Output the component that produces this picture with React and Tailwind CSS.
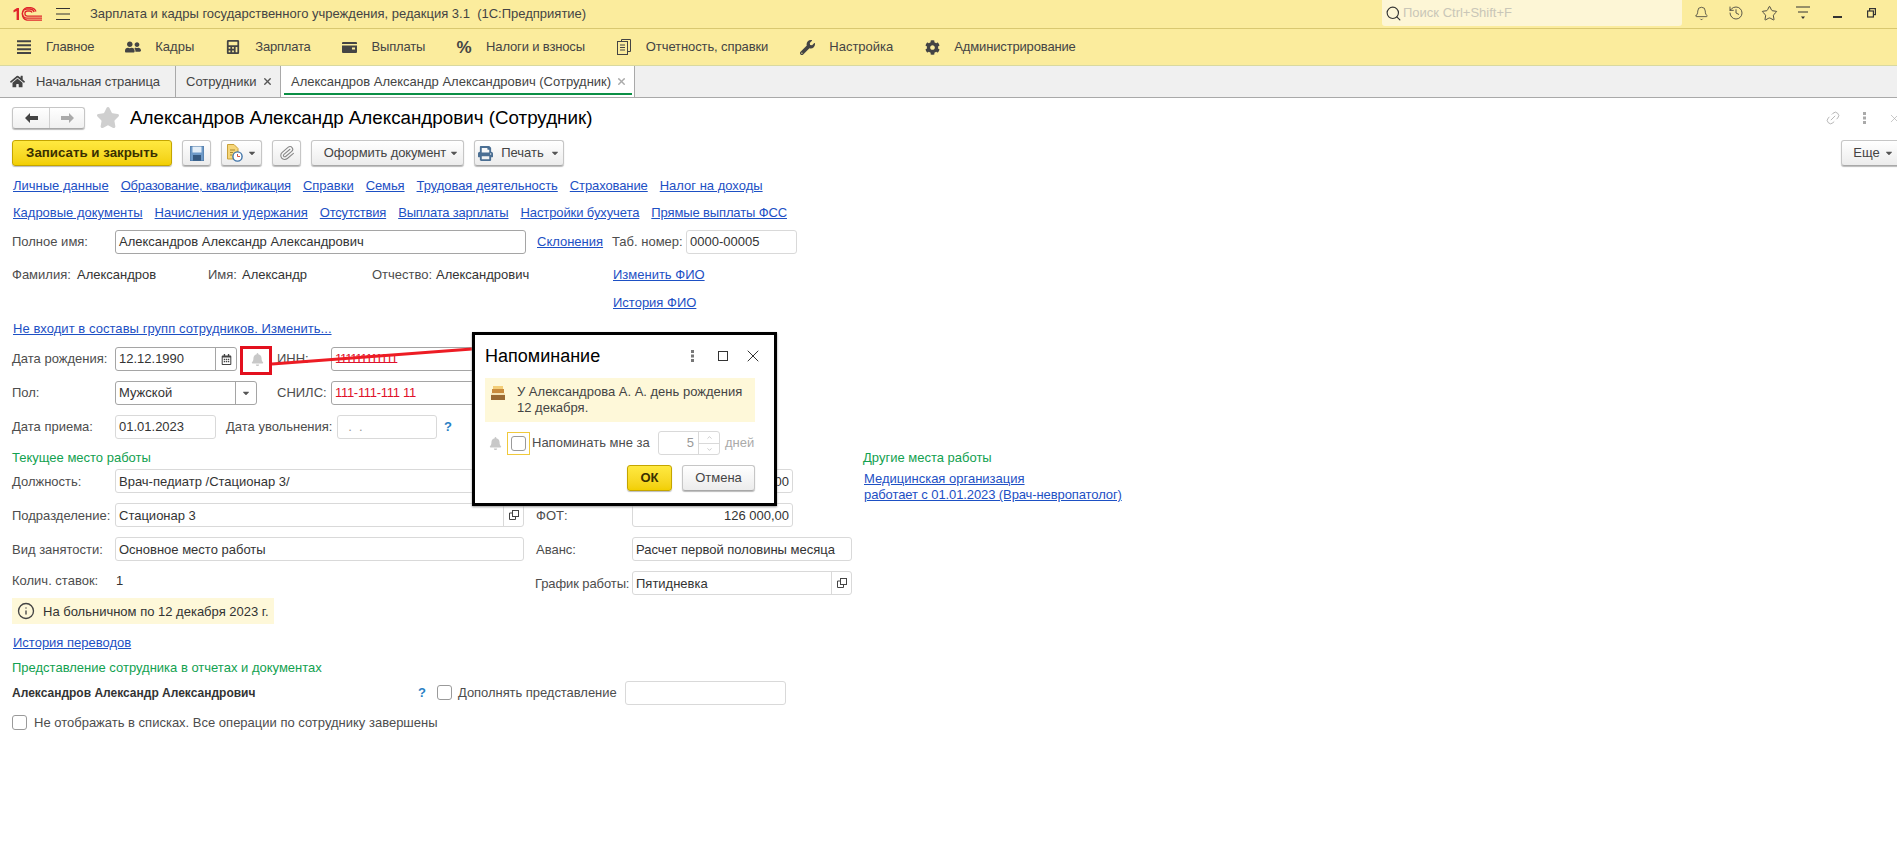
import React from "react";
import { FaHome, FaUserFriends, FaCalculator, FaWrench, FaCog, FaPrint, FaBell, FaRegCalendarAlt, FaCaretDown } from "react-icons/fa";
import { Search, Bell, History, Star, Link2, X, Paperclip, Info, ChevronUp, ChevronDown } from "lucide-react";

const Logo = () => (
  <svg width="30" height="14" viewBox="0 0 30 14" className="shrink-0">
    <path d="M0.5 3.2 L4 1 H6 V13 H3.6 V4 L0.5 5.5Z" fill="#e0262b" />
    <path d="M29 11.2 H14 A4.6 4.6 0 0 1 14 2 H17 A4.5 4.5 0 0 1 21.2 5" fill="none" stroke="#e0262b" strokeWidth="1.3" />
    <path d="M29 13.2 H14 A6.6 6.6 0 0 1 14 0.6 H17 A6.6 6.6 0 0 1 23 4.6" fill="none" stroke="#e0262b" strokeWidth="1.3" />
    <path d="M29 9.2 H14.5 A2.6 2.6 0 0 1 14.5 4 H16.5 A2.5 2.5 0 0 1 19 5.6" fill="none" stroke="#e0262b" strokeWidth="1.3" />
  </svg>
);
const Burger = () => (
  <svg width="14" height="12" viewBox="0 0 14 12" className="shrink-0">
    <path d="M0 .5H14M0 6H14M0 11.5H14" stroke="#333" strokeWidth="1" />
  </svg>
);
const Bars = () => (
  <svg width="14" height="14" viewBox="0 0 14 14"><path d="M0 1.2H14M0 5.2H14M0 9.2H14M0 13H14" stroke="#444" strokeWidth="2" /></svg>
);
const Wallet = () => (
  <svg width="15" height="11" viewBox="0 0 15 11"><path d="M0 1 A1 1 0 0 1 1 0H14 A1 1 0 0 1 15 1V2H0Z M0 3.5H15V10A1 1 0 0 1 14 11H1A1 1 0 0 1 0 10Z" fill="#444" /><rect x="10" y="5.5" width="3" height="2" fill="#fbec9d" /></svg>
);
const Docs = () => (
  <svg width="14" height="16" viewBox="0 0 14 16" fill="none" stroke="#444" strokeWidth="1"><path d="M4.5 2.5V.5H13.5V12.5H11" /><rect x=".5" y="2.5" width="10" height="13" /><path d="M3 6H8M3 8.5H8M3 11H8" /></svg>
);
const Percent = () => <span className="font-bold text-[17px] text-[#444] leading-none">%</span>;
const Restore = () => (
  <svg width="9" height="10" viewBox="0 0 9 10" fill="none" stroke="#333" strokeWidth="1.2"><rect x="2.6" y=".6" width="5.8" height="6" /><rect x=".6" y="3" width="5.8" height="6" fill="#fbec9d" /></svg>
);
const FilterIcon = () => (
  <svg width="14" height="14" viewBox="0 0 14 14"><path d="M0 1H14M2 6H12" stroke="#333" strokeWidth="1" /><path d="M5 10.5H9L7 13Z" fill="#333" /></svg>
);
const Save = () => (
  <svg width="14" height="15" viewBox="0 0 14 15"><path d="M0 1A1 1 0 0 1 1 0H13A1 1 0 0 1 14 1V15H0Z" fill="#6e9ac8" /><rect x="2.5" y="0" width="9" height="6.5" fill="#e3eef8" /><rect x="3" y="9" width="8" height="6" fill="#35587f" /><path d="M0 0H14V15H0Z" fill="none" stroke="#45709f" /></svg>
);
const DocClock = () => (
  <svg width="16" height="18" viewBox="0 0 16 18"><path d="M.5 .5H7L11 4.5V15H.5Z" fill="#f6d679" stroke="#c9a13a" /><path d="M3 6H8M3 8.5H6M3 11H5" stroke="#a98a2e" /><circle cx="10.5" cy="12.5" r="4.6" fill="#fff" stroke="#3f73a8" strokeWidth="1.4" /><path d="M10.5 10V12.5H13" stroke="#d9503f" fill="none" /></svg>
);
const Cake = () => (
  <svg width="14" height="14" viewBox="0 0 14 14"><path d="M3 0V3M5 0V3M7 0V3M9 0V3M11 0V3" stroke="#e8a317" /><rect x="1" y="3" width="12" height="4" fill="#c98b3d" /><rect x="0" y="7" width="14" height="2" fill="#f5e3b5" /><rect x="0" y="9" width="14" height="5" fill="#9a6a33" /></svg>
);
const OpenIcon = () => (
  <svg width="10" height="10" viewBox="0 0 10 10" fill="none" stroke="#444"><rect x="3.5" y=".5" width="6" height="6" /><path d="M3.5 3H.5V9.5H6.5V6.5" /></svg>
);
const Dots = ({ c = "#777" }) => (
  <svg width="3" height="12" viewBox="0 0 3 12" fill={c}><rect width="3" height="3" /><rect y="4.5" width="3" height="3" /><rect y="9" width="3" height="3" /></svg>
);
const Caret = () => <FaCaretDown className="text-[#555] text-[10px] shrink-0" />;

const MenuItem = ({ icon, t = "tracking-[-0.2px]", children }) => (
  <div className="flex items-center gap-[14px]">
    <span className="w-4 flex justify-center text-[#444] text-[16px]">{icon}</span>
    <span className={t}>{children}</span>
  </div>
);
const Btn = ({ className = "", children }) => (
  <div className={"h-[26px] flex items-center justify-center rounded-[3px] border border-[#c6c6c6] border-b-[#a8a8a8] bg-gradient-to-b from-white to-[#ececec] shadow-[0_1px_1px_#bbb] text-[#444] " + className}>{children}</div>
);
const YellowBtn = ({ className = "", children }) => (
  <div className={"h-[26px] flex items-center justify-center rounded-[3px] border border-[#c4a500] bg-gradient-to-b from-[#ffe93f] to-[#f2cf00] shadow-[0_1px_1px_#bbb] text-[#3a3000] " + className}>{children}</div>
);
const Field = ({ w, dark, right, low, addon, addonW = "w-5", children, text = "text-[#333]" }) => (
  <div className={"h-6 shrink-0 flex items-center rounded-[3px] border bg-white " + w + " " + (dark ? "border-[#a5a5a5]" : "border-[#d9d9d9]")}>
    <span className={"flex-1 min-w-0 whitespace-pre px-[3px] " + text + " " + (right ? "text-right " : "") + (low ? "pt-px" : "")}>{children}</span>
    {addon && <span className={"h-full flex items-center justify-center border-l shrink-0 " + addonW + " " + (dark ? "border-[#a5a5a5]" : "border-[#d9d9d9]")}>{addon}</span>}
  </div>
);
const L = ({ w = "w-[103px]", low, children }) => <span className={"shrink-0 text-[#4d4d4d] whitespace-nowrap " + w + (low ? " pt-px" : "")}>{children}</span>;
const A = ({ t = "", children }) => <span className={"text-[#1d50c4] underline whitespace-nowrap " + t}>{children}</span>;
const Green = ({ children }) => <span className="text-[#12a150] whitespace-nowrap">{children}</span>;
const Check = () => <span className="block w-[15px] h-[15px] shrink-0 rounded-[3px] border border-[#9a9a9a] bg-white" />;

export default function App() {
  return (
    <div className="relative w-full h-[848px] overflow-hidden bg-white font-['Liberation_Sans',Arial,sans-serif] text-[13px] leading-[18px] text-[#333]">
      {/* title bar */}
      <div className="h-[29px] bg-[#fbec9d] border-b border-[#d9c870] flex items-center pl-[13px] pr-[21px]">
        <Logo />
        <span className="ml-[13px]"><Burger /></span>
        <span className="ml-[20px] whitespace-pre text-[#444]">Зарплата и кадры государственного учреждения, редакция 3.1  (1С:Предприятие)</span>
        <div className="ml-auto flex items-center self-start">
          <div className="w-[300px] h-[26px] rounded-b-[3px] bg-[#fdf6d6] flex items-center pl-[3px] gap-[1px]">
            <Search size={17} strokeWidth={1.6} className="text-[#333]" />
            <span className="text-[#c9c6b8]">Поиск Ctrl+Shift+F</span>
          </div>
          <div className="flex items-center h-[26px]">
            <Bell size={15} strokeWidth={1.2} className="ml-[12px] text-[#333]" />
            <History size={16} strokeWidth={1.2} className="ml-[19px] text-[#333]" />
            <Star size={17} strokeWidth={1.2} className="ml-[17px] text-[#333]" />
            <span className="ml-[18px] flex"><FilterIcon /></span>
            <span className="ml-[23px] mt-[8px] w-[9px] h-[1.5px] bg-[#333]" />
            <span className="ml-[25px] flex"><Restore /></span>
          </div>
        </div>
      </div>
      {/* sections */}
      <div className="h-[37px] bg-[#fbec9d] border-b border-[#d9d9a0] flex items-center pl-[16px] gap-[31px] text-[#444]">
        <MenuItem icon={<Bars />}>Главное</MenuItem>
        <MenuItem t="" icon={<FaUserFriends size={18} />}>Кадры</MenuItem>
        <MenuItem icon={<FaCalculator size={14} />}>Зарплата</MenuItem>
        <MenuItem icon={<Wallet />}>Выплаты</MenuItem>
        <MenuItem t="tracking-[-0.15px]" icon={<Percent />}>Налоги и взносы</MenuItem>
        <MenuItem t="tracking-[-0.1px]" icon={<Docs />}>Отчетность, справки</MenuItem>
        <MenuItem t="" icon={<FaWrench size={15} />}>Настройка</MenuItem>
        <MenuItem t="tracking-[-0.15px]" icon={<FaCog size={15} />}>Администрирование</MenuItem>
      </div>
      {/* tabs */}
      <div className="h-[32px] bg-[#f0f0f0] border-b border-[#a9a9a9] flex text-[#444]">
        <div className="w-[176px] flex items-center pl-[10px] gap-[11px] border-r border-[#a9a9a9]">
          <FaHome size={15} className="text-[#444]" /><span className="tracking-[-0.1px]">Начальная страница</span>
        </div>
        <div className="w-[105px] flex items-center pl-[10px] border-r border-[#a9a9a9]">
          <span>Сотрудники</span><X size={11} strokeWidth={3} className="ml-[6px] text-[#555]" />
        </div>
        <div className="relative w-[354px] flex items-center pl-[10px] bg-white border-r border-[#a9a9a9]">
          <span>Александров Александр Александрович (Сотрудник)</span><X size={11} strokeWidth={3} className="ml-[5px] text-[#aaa]" />
          <span className="absolute left-[3px] right-[2px] top-[27px] h-[2px] bg-[#0b8f45]" />
        </div>
      </div>
      {/* form */}
      <div className="pl-3 relative">
        <div className="pt-[9px] h-[31px] flex items-center">
          <div className="w-[73px] h-[22px] flex rounded-[3px] border border-[#c6c6c6] border-b-[#a8a8a8] bg-gradient-to-b from-white to-[#f0f0f0] shadow-[0_1px_1px_#bbb]">
            <span className="w-[37px] flex items-center justify-center border-r border-[#d0d0d0]">
              <svg width="13" height="10" viewBox="0 0 13 10"><path d="M5 0V3H13V7H5V10L0 5Z" fill="#444" /></svg>
            </span>
            <span className="flex-1 flex items-center justify-center">
              <svg width="13" height="10" viewBox="0 0 13 10"><path d="M8 0V3H0V7H8V10L13 5Z" fill="#aaa" /></svg>
            </span>
          </div>
          <span className="ml-[11px] flex"><Star size={24} fill="#cfcfcf" stroke="#cfcfcf" /></span>
          <span className="ml-[10px] text-[18.8px] leading-[24px] text-black whitespace-nowrap">Александров Александр Александрович (Сотрудник)</span>
          <div className="ml-auto flex items-center text-[#aaa]">
            <Link2 size={16} strokeWidth={1.2} className="-rotate-45" />
            <span className="ml-[22px]"><Dots c="#aaa" /></span>
            <X size={13} strokeWidth={1.2} className="ml-[22px] -mr-[4px]" />
          </div>
        </div>
        <div className="mt-[11px] flex items-center h-[26px]">
          <YellowBtn className="w-[160px] font-bold text-[13.3px]">Записать и закрыть</YellowBtn>
          <Btn className="ml-[10px] w-[29px]"><Save /></Btn>
          <Btn className="ml-[10px] w-[41px] gap-[4px]"><DocClock /><Caret /></Btn>
          <Btn className="ml-[10px] w-[29px]"><Paperclip size={16} strokeWidth={1.6} className="text-[#888] rotate-[5deg]" /></Btn>
          <Btn className="ml-[10px] w-[153px] gap-[3px]"><span className="w-[5px]" /><span className="tracking-[-0.1px]">Оформить документ</span><Caret /></Btn>
          <Btn className="ml-[10px] w-[90px] gap-[6px]"><FaPrint size={15} className="text-[#4b6f93] mr-[2px]" />Печать<Caret /></Btn>
          <Btn className="ml-auto -mr-[3px] w-[59px] gap-[4px] rounded-r-none"><span className="w-[2px]" />Еще<Caret /></Btn>
        </div>
        <div className="mt-[11px] h-[18px] flex gap-3 pl-px">
          <A>Личные данные</A><A t="tracking-[-0.2px]">Образование, квалификация</A><A>Справки</A><A t="tracking-[-0.1px]">Семья</A><A t="tracking-[-0.05px]">Трудовая деятельность</A><A t="tracking-[-0.1px]">Страхование</A><A>Налог на доходы</A>
        </div>
        <div className="mt-[9px] h-[18px] flex gap-3 pl-px">
          <A>Кадровые документы</A><A>Начисления и удержания</A><A t="tracking-[-0.2px]">Отсутствия</A><A t="tracking-[-0.2px]">Выплата зарплаты</A><A t="tracking-[-0.1px]">Настройки бухучета</A><A t="tracking-[-0.13px]">Прямые выплаты ФСС</A>
        </div>
        <div className="mt-2 h-6 flex items-center">
          <L>Полное имя:</L>
          <Field w="w-[411px]" dark>Александров Александр Александрович</Field>
          <span className="ml-[11px] w-[75px]"><A>Склонения</A></span>
          <L w="w-[74px]">Таб. номер:</L>
          <Field w="w-[111px]">0000-00005</Field>
        </div>
        <div className="mt-[12px] h-[18px] flex items-center whitespace-nowrap">
          <L w="w-[65px]">Фамилия:</L><span className="w-[131px]">Александров</span>
          <L w="w-[34px]">Имя:</L><span className="w-[130px]">Александр</span>
          <L w="w-[64px]">Отчество:</L><span className="w-[177px]">Александрович</span>
          <A>Изменить ФИО</A>
        </div>
        <div className="mt-[10px] h-[18px] pl-[601px]"><A>История ФИО</A></div>
        <div className="mt-2 h-[18px] pl-px"><A t="tracking-[0.05px]">Не входит в составы групп сотрудников. Изменить...</A></div>
        <div className="mt-[9px] h-6 flex items-center">
          <L>Дата рождения:</L>
          <Field w="w-[122px]" dark addon={<FaRegCalendarAlt size={11} className="text-[#444]" />} addonW="w-[21px]">12.12.1990</Field>
          <span className="w-[40px] flex justify-center"><FaBell size={13} className="text-[#c8c8c8]" /></span>
          <L w="w-[54px]">ИНН:</L>
          <Field w="w-[160px]" dark text="text-[#e0102a] tracking-[-1.2px]">111111111111</Field>
        </div>
        <div className="mt-[10px] h-6 flex items-center">
          <L>Пол:</L>
          <Field w="w-[142px]" dark addon={<Caret />} addonW="w-[21px]">Мужской</Field>
          <L w="w-[74px]"><span className="block pl-5">СНИЛС:</span></L>
          <Field w="w-[160px]" dark text="text-[#e0102a] tracking-[-0.3px]">111-111-111 11</Field>
        </div>
        <div className="mt-[10px] h-6 flex items-center">
          <L>Дата приема:</L>
          <Field w="w-[101px]">01.01.2023</Field>
          <L w="w-[121px]"><span className="block pl-[10px]">Дата увольнения:</span></L>
          <Field w="w-[100px]" text="text-[#999]">{"  .  ."}</Field>
          <span className="ml-[7px] font-bold text-[#2a7fc4]">?</span>
        </div>
        <div className="mt-[10px] h-[18px] flex">
          <span className="w-[851px]"><Green>Текущее место работы</Green></span>
          <Green>Другие места работы</Green>
        </div>
        <div className="mt-[2px] h-6 flex items-center">
          <L low>Должность:</L>
          <Field low w="w-[409px]">Врач-педиатр /Стационар 3/</Field>
          <L low w="w-[108px]"><span className="block pl-[12px]">Оклад:</span></L>
          <Field low w="w-[161px]" right>126 000,00</Field>
          <div className="ml-[71px] mt-[12px] leading-[16px] flex flex-col">
            <A>Медицинская организация</A>
            <A t="tracking-[-0.1px]">работает с 01.01.2023 (Врач-невропатолог)</A>
          </div>
        </div>
        <div className="mt-[10px] h-6 flex items-center">
          <L low>Подразделение:</L>
          <Field low w="w-[409px]" addon={<OpenIcon />}>Стационар 3</Field>
          <L low w="w-[108px]"><span className="block pl-[12px]">ФОТ:</span></L>
          <Field low w="w-[161px]" right>126 000,00</Field>
        </div>
        <div className="mt-[10px] h-6 flex items-center">
          <L low>Вид занятости:</L>
          <Field low w="w-[409px]">Основное место работы</Field>
          <L low w="w-[108px]"><span className="block pl-[12px]">Аванс:</span></L>
          <Field low w="w-[220px]">Расчет первой половины месяца</Field>
        </div>
        <div className="mt-[10px] h-6 flex items-center">
          <L><span className="block pb-[4px]">Колич. ставок:</span></L>
          <span className="w-[409px] pb-[4px] pl-px">1</span>
          <L low w="w-[108px]"><span className="block pl-[11px] tracking-[-0.1px]">График работы:</span></L>
          <Field low w="w-[220px]" addon={<OpenIcon />}>Пятидневка</Field>
        </div>
        <div className="mt-[3px] h-[26px] w-[262px] bg-[#fef8d9] flex items-center pl-[5px] gap-[8px]">
          <Info size={18} strokeWidth={1.8} className="text-[#444]" /><span className="pt-px">На больничном по 12 декабря 2023 г.</span>
        </div>
        <div className="mt-[10px] h-[18px] pl-px"><A>История переводов</A></div>
        <div className="mt-[7px] h-[18px]"><Green>Представление сотрудника в отчетах и документах</Green></div>
        <div className="mt-[3px] h-[25px] flex items-center">
          <span className="w-[406px] font-bold text-[12px] text-[#333] whitespace-nowrap">Александров Александр Александрович</span>
          <span className="w-[19px] font-bold text-[#2a7fc4]">?</span>
          <Check />
          <span className="ml-[6px] w-[167px] text-[#4d4d4d] whitespace-nowrap tracking-[-0.05px]">Дополнять представление</span>
          <Field w="w-[161px]"> </Field>
        </div>
        <div className="mt-2 h-[18px] flex items-center gap-[7px] text-[#4d4d4d]">
          <Check /><span className="pt-px">Не отображать в списках. Все операции по сотруднику завершены</span>
        </div>
      </div>

      {/* red annotation */}
      <span className="absolute left-[240px] top-[346px] w-[32px] h-[29px] border-[3px] border-[#e3101e]" />
      <svg className="absolute left-[270px] top-[345px]" width="204" height="22" viewBox="0 0 204 22">
        <path d="M2 19L202 4" stroke="#ed1c24" strokeWidth="3" fill="none" />
      </svg>

      {/* reminder popup */}
      <div className="absolute left-[472px] top-[332px] w-[305px] h-[174px] border-[3px] border-black bg-white shadow-[0_1px_2px_#999]">
        <div className="flex items-center h-[24px] mt-[9px] pl-[10px]">
          <span className="w-[206px] text-[18px] leading-[24px] text-black">Напоминание</span>
          <span className="flex"><Dots /></span>
          <span className="ml-[24px] w-[10px] h-[10px] border border-[#333]" />
          <X size={20} strokeWidth={1.2} className="ml-[15px] text-[#333]" />
        </div>
        <div className="mt-[10px] ml-[10px] w-[270px] h-[44px] bg-[#fef8d9] flex pl-[6px] pt-[6px]">
          <span className="mt-[2px] flex"><Cake /></span>
          <span className="ml-[12px] leading-[16px] text-[#444]">У Александрова А. А. день рождения<br />12 декабря.</span>
        </div>
        <div className="mt-[9px] ml-[14px] h-6 flex items-center">
          <FaBell size={13} className="text-[#c8c8c8]" />
          <span className="ml-[5px] w-[23px] h-[23px] flex items-center justify-center border border-[#f0c93c]">
            <Check />
          </span>
          <span className="ml-[2px] w-[126px] text-[#4d4d4d] whitespace-nowrap">Напоминать мне за</span>
          <div className="w-[62px] h-6 flex rounded-[3px] border border-[#d9d9d9] text-[#999]">
            <span className="flex-1 text-right pr-[4px] leading-[22px]">5</span>
            <span className="w-[21px] border-l border-[#d9d9d9] flex flex-col items-center justify-center text-[#aaa]">
              <ChevronUp size={7} strokeWidth={2} />
              <span className="w-full h-px bg-[#d9d9d9] my-[2px]" />
              <ChevronDown size={7} strokeWidth={2} />
            </span>
          </div>
          <span className="ml-[5px] text-[#aaa]">дней</span>
        </div>
        <div className="mt-[10px] flex">
          <YellowBtn className="ml-[152px] w-[45px] font-bold">ОК</YellowBtn>
          <Btn className="ml-[10px] w-[73px]">Отмена</Btn>
        </div>
      </div>
    </div>
  );
}
